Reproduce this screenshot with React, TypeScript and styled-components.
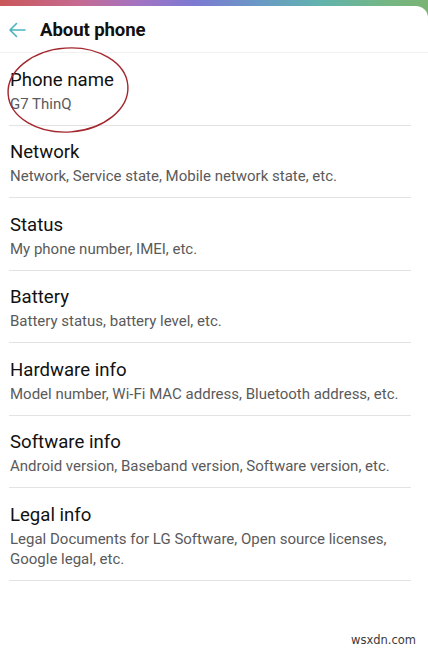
import React from "react";
import styled, { createGlobalStyle } from "styled-components";

const Global = createGlobalStyle`
  html, body { margin: 0; padding: 0; background: #ffffff; }
  body { font-family: Roboto, "Noto Sans", Arial, sans-serif; }
  * { box-sizing: border-box; }
`;

const Screen = styled.div`
  position: relative;
  width: 428px;
  height: 650px;
  overflow: hidden;
  background: linear-gradient(
    90deg,
    #c9575a 0%,
    #c66a90 18%,
    #a473c2 32%,
    #7d79d2 45%,
    #6a98c6 60%,
    #62b3ae 75%,
    #74b684 90%,
    #7bb373 100%
  );
`;

const Card = styled.div`
  margin-top: 6px;
  height: 644px;
  background: #ffffff;
  border-top-right-radius: 12px;
  display: flex;
  flex-direction: column;
`;

const Header = styled.div`
  height: 47px;
  display: flex;
  align-items: center;
  padding: 1px 0 0 8px;
  border-bottom: 1px solid #f1f1f1;
`;

const Back = styled.div`
  width: 18px;
  height: 16px;
  display: flex;
  align-items: center;
  margin-right: 14px;
`;

const Title = styled.h1`
  margin: 0;
  font-size: 18.6px;
  font-weight: 700;
  color: #111;
  letter-spacing: -0.1px;
`;

const List = styled.div`
  display: flex;
  flex-direction: column;
  padding: 0 17px 0 9px;
`;

const Row = styled.div`
  display: flex;
  flex-direction: column;
  padding: 14.5px 0 11px 1px;
  border-bottom: 1px solid #e3e3e3;
`;

const RowTitle = styled.div`
  font-size: 18.6px;
  line-height: 24px;
  color: #111;
`;

const RowSub = styled.div`
  margin-top: 2px;
  font-size: 15px;
  line-height: 20px;
  color: #5a5a5a;
`;

const Ellipse = styled.svg`
  position: absolute;
  left: 4px;
  top: 45px;
`;

const Watermark = styled.div`
  position: absolute;
  right: 12px;
  bottom: 3px;
  font-family: "DejaVu Sans", sans-serif;
  font-size: 11.5px;
  color: #3a3a3a;
`;

const items: { t: string; s: string }[] = [
  { t: "Phone name", s: "G7 ThinQ" },
  { t: "Network", s: "Network, Service state, Mobile network state, etc." },
  { t: "Status", s: "My phone number, IMEI, etc." },
  { t: "Battery", s: "Battery status, battery level, etc." },
  { t: "Hardware info", s: "Model number, Wi-Fi MAC address, Bluetooth address, etc." },
  { t: "Software info", s: "Android version, Baseband version, Software version, etc." },
  {
    t: "Legal info",
    s: "Legal Documents for LG Software, Open source licenses, Google legal, etc.",
  },
];

export default function App() {
  return (
    <>
      <Global />
      <Screen>
        <Card>
          <Header>
            <Back>
              <svg width="18" height="16" viewBox="0 0 18 16">
                <path
                  d="M17 8 H2 M8.5 1.5 L2 8 L8.5 14.5"
                  fill="none"
                  stroke="#4bb2bf"
                  strokeWidth="1.6"
                  strokeLinecap="round"
                  strokeLinejoin="round"
                />
              </svg>
            </Back>
            <Title>About phone</Title>
          </Header>
          <List>
            {items.map((it) => (
              <Row key={it.t}>
                <RowTitle>{it.t}</RowTitle>
                <RowSub>{it.s}</RowSub>
              </Row>
            ))}
          </List>
        </Card>
        <Ellipse width="130" height="92" viewBox="0 0 130 92">
          <ellipse
            cx="64"
            cy="45"
            rx="60"
            ry="42"
            fill="none"
            stroke="#a3262c"
            strokeWidth="1.4"
            transform="rotate(-4 64 45)"
          />
        </Ellipse>
        <Watermark>wsxdn.com</Watermark>
      </Screen>
    </>
  );
}
